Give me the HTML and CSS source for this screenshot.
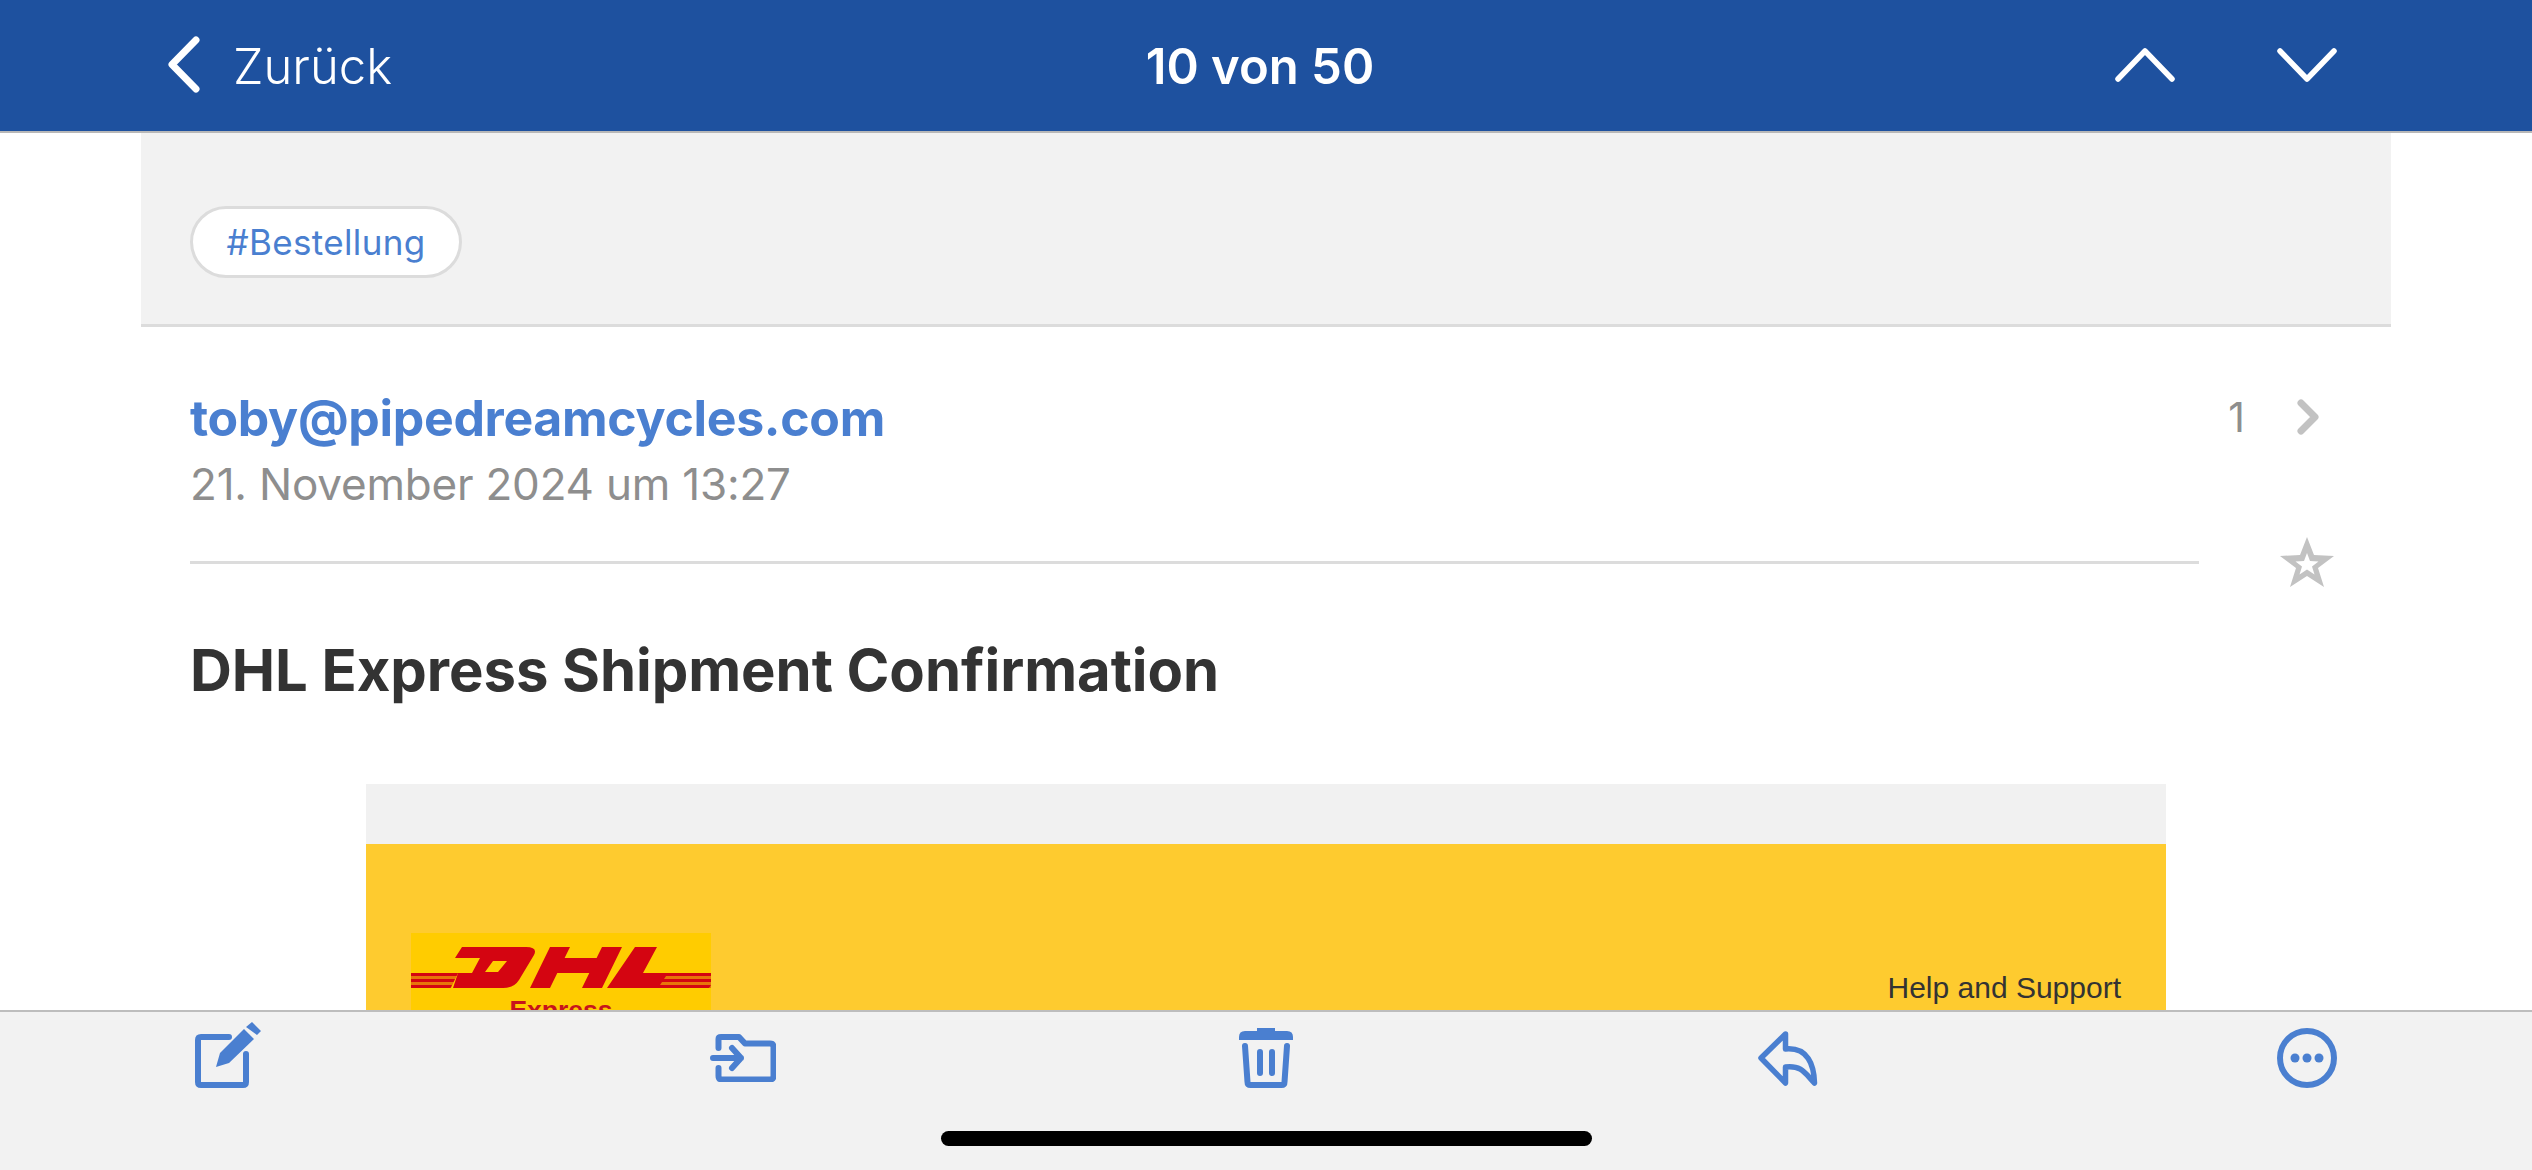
FILE: index.html
```html
<!DOCTYPE html>
<html lang="de">
<head>
<meta charset="utf-8">
<title>10 von 50</title>
<link rel="stylesheet" href="styles.css">
</head>
<body>
<header class="topbar">
  <div class="back">
    <svg class="ic-back" viewBox="0 0 32 57"><path d="M28 4 L4 28.5 L28 53" /></svg>
    <span>Zurück</span>
  </div>
  <div class="counter">10 von 50</div>
  <div class="arrows">
    <svg class="ic-arrow" viewBox="0 0 60 34"><path d="M3 31 L30 3 L57 31" /></svg>
    <svg class="ic-arrow" viewBox="0 0 60 34"><path d="M3 3 L30 31 L57 3" /></svg>
  </div>
</header>
<main class="content">
  <section class="tags"><span class="tag">#Bestellung</span></section>
  <section class="sender">
    <div class="sender-text">
      <div class="email">toby@pipedreamcycles.com</div>
      <div class="date">21. November 2024 um 13:27</div>
    </div>
    <div class="count">
      <span>1</span>
      <svg class="ic-next" viewBox="0 0 22 36"><path d="M4 4 L18 18 L4 32" /></svg>
    </div>
  </section>
  <div class="rule-row">
    <div class="rule"></div>
    <svg class="ic-star" viewBox="0 0 54 50"><path fill-rule="evenodd" d="M27 0 L34 18 L54 19 L38 31 L44 50 L27 39 L10 50 L16 31 L0 19 L20 18 Z M27 16 L24 24 L15.500 24.500 L22 29.500 L19.500 37.500 L27 32.500 L34.500 37.500 L32 29.500 L38.500 24.500 L30 24 Z"/></svg>
  </div>
  <h1 class="subject">DHL Express Shipment Confirmation</h1>
  <article class="mail">
    <div class="mail-top"></div>
    <div class="mail-head">
      <div class="logo">
        <svg class="dhl" viewBox="0 0 300 62">
          <path fill="#e8750a" d="M0 40h47l-7 15H0zM300 40h-45l-10 15h55z"/>
          <g fill="#d40511">
            <path d="M0 40h47l-1.500 3H0zM0 46h44l-1.500 3H0zM0 52h41l-1.500 3H0z"/>
            <path d="M300 40h-44l-2 3h46zM300 46h-48l-2 3h50zM300 52h-52l-2 3h52z"/>
            <path fill-rule="evenodd" d="M51 14H115Q127 14 123 22L108 47Q103 55 92 55H42L47 40H61L69 25H44ZM82 28H96L87 39H74Z"/>
            <path d="M139 14H159L153.600 25H185.600L191 14H211L191 55H171L178.300 40H146.300L139 55H119Z"/>
            <path d="M224 14H246L232 40H257L247 55H196Z"/>
          </g>
        </svg>
        <div class="express">Express</div>
      </div>
      <div class="help">Help and Support</div>
    </div>
  </article>
</main>
<footer class="toolbar">
  <div class="tools">
    <svg class="ic-compose" viewBox="0 0 66 66"><path class="line" d="M34 15 H6 Q3 15 3 18 V60 Q3 63 6 63 H48 Q51 63 51 60 V32"/><path class="solid" d="M57 0 L66 9 L62 13 L51 5 Z M49 7 L59 17 L34 41 L21 45 L25 31 Z"/></svg>
    <svg class="ic-move" viewBox="0 0 66 48"><path class="line" d="M8.500 14 V5 Q8.500 3 11 3 H29 L35 9.500 H60 Q63.500 9.500 63.500 13 V42 Q63.500 45.500 60 45.500 H12 Q8.500 45.500 8.500 42 V34"/><path class="line" d="M3 24 H31 M22 14 L31 24 L22 34"/></svg>
    <svg class="ic-trash" viewBox="0 0 54 60"><path class="solid" d="M18 0 H36 V3 H48 Q54 3 54 9 V12 H0 V9 Q0 3 6 3 H18 Z"/><path class="line" d="M6 18 L8.500 54 Q8.500 57 11.500 57 H42.500 Q45.500 57 45.500 54 L48 18"/><path class="line" d="M21 24 V45 M33 24 V45"/></svg>
    <svg class="ic-reply" viewBox="0 0 60 56"><path class="line thin" d="M27.500 3 L3 27 L27.500 52 V36 C43 34 47 42 56.500 52 C56 34 50 16 27.500 18 Z"/></svg>
    <svg class="ic-more" viewBox="0 0 60 60"><circle class="line" cx="30" cy="30" r="27"/><circle class="solid" cx="18" cy="30" r="4.500"/><circle class="solid" cx="30" cy="30" r="4.500"/><circle class="solid" cx="42" cy="30" r="4.500"/></svg>
  </div>
  <div class="home"></div>
</footer>
</body>
</html>
```
FILE: styles.css
```css
* { box-sizing: border-box; }
html, body { margin: 0; padding: 0; }
body {
  width: 2532px;
  height: 1170px;
  overflow: hidden;
  display: flex;
  flex-direction: column;
  background: #fff;
  font-family: Inter, "Noto Sans", "Liberation Sans", sans-serif;
}
svg { display: block; flex: none; }
svg path, svg circle { stroke-linecap: round; stroke-linejoin: round; }

.topbar {
  height: 133px;
  flex: none;
  background: #1e519f;
  border-bottom: 2px solid #b8b8b8;
  display: grid;
  grid-template-columns: 1fr auto 1fr;
  align-items: center;
  padding: 2px 195px 0 168px;
  color: #fff;
}
.back { display: flex; align-items: center; gap: 33px; font-size: 49px; font-weight: 300; }
.ic-back { width: 32px; height: 57px; margin-bottom: 4px; }
.ic-back path { fill: none; stroke: #fff; stroke-width: 7; }
.counter { font-size: 49px; font-weight: 600; margin-left: 15px; }
.arrows { display: flex; justify-content: flex-end; gap: 102px; }
.ic-arrow { width: 60px; height: 34px; margin-bottom: 4px; }
.ic-arrow path { fill: none; stroke: #fff; stroke-width: 5.5; }

.content { flex: 1; min-height: 0; overflow: hidden; }
.tags {
  margin: 0 141px;
  height: 194px;
  padding-top: 73px;
  background: #f2f2f2;
  border-bottom: 3px solid #dcdcdc;
}
.tag {
  display: block;
  width: 272px;
  height: 72px;
  margin-left: 49px;
  border: 3px solid #dcdcdc;
  border-radius: 36px;
  background: #fff;
  color: #4a7fd0;
  font-size: 35px;
  letter-spacing: 0.35px;
  line-height: 66px;
  text-align: center;
}
.sender {
  margin: 0 213px 0 190px;
  height: 210px;
  padding-top: 60px;
  display: flex;
  justify-content: space-between;
  align-items: flex-start;
}
.email { font-size: 50px; font-weight: 700; color: #4a7fd0; line-height: 62px; letter-spacing: -0.33px; }
.date { font-size: 44px; color: #8e8e8e; line-height: 56px; margin-top: 7px; letter-spacing: -0.2px; }
.count { display: flex; align-items: center; gap: 52px; margin-top: 4px; font-size: 41px; color: #8e8e8e; line-height: 52px; }
.ic-next { width: 22px; height: 36px; }
.ic-next path { fill: none; stroke: #c2c2c2; stroke-width: 7; }
.rule-row {
  margin: 0 0 0 190px;
  display: flex;
  align-items: center;
  gap: 81px;
  height: 50px;
}
.rule { width: 2009px; height: 3px; background: #dcdcdc; }
.ic-star { width: 54px; height: 50px; fill: #c2c2c2; }
.subject {
  margin: 47px 0 0 190px;
  font-size: 58px;
  line-height: 72px;
  font-weight: 700;
  letter-spacing: -0.05px;
  color: #333;
}
.mail { margin: 78px 366px 0 366px; }
.mail-top { height: 60px; background: #f1f1f1; }
.mail-head {
  height: 220px;
  background: #fecb2f;
  padding: 89px 45px 0 45px;
  display: flex;
  justify-content: space-between;
}
.logo { width: 300px; height: 110px; background: #ffcc00; }
.dhl { width: 300px; height: 62px; }
.express {
  font-family: "Liberation Sans", sans-serif;
  font-weight: 700;
  font-size: 26.5px;
  line-height: 30px;
  text-align: center;
  color: #c7141c;
}
.help {
  font-family: "Liberation Sans", sans-serif;
  font-size: 30px;
  line-height: 36px;
  color: #333;
  padding-top: 37px;
}

.toolbar {
  height: 160px;
  flex: none;
  background: #f2f2f2;
  border-top: 2px solid #bdbdbd;
}
.tools {
  height: 119px;
  padding: 10px 195px 0 195px;
  display: flex;
  align-items: flex-start;
}
.line { fill: none; stroke: #4a7fd0; stroke-width: 6; }
.line.thin { stroke-width: 5.5; }
.solid { fill: #4a7fd0; }
.ic-compose { width: 66px; height: 66px; }
.ic-move { width: 66px; height: 48px; margin: 12px 0 0 449px; }
.ic-trash { width: 54px; height: 60px; margin: 6px 0 0 463px; }
.ic-reply { width: 60px; height: 56px; margin: 9px 0 0 465px; }
.ic-more { width: 60px; height: 60px; margin: 6px 0 0 459px; }
.home {
  width: 651px;
  height: 15px;
  margin-left: 941px;
  border-radius: 8px;
  background: #000;
}
```
